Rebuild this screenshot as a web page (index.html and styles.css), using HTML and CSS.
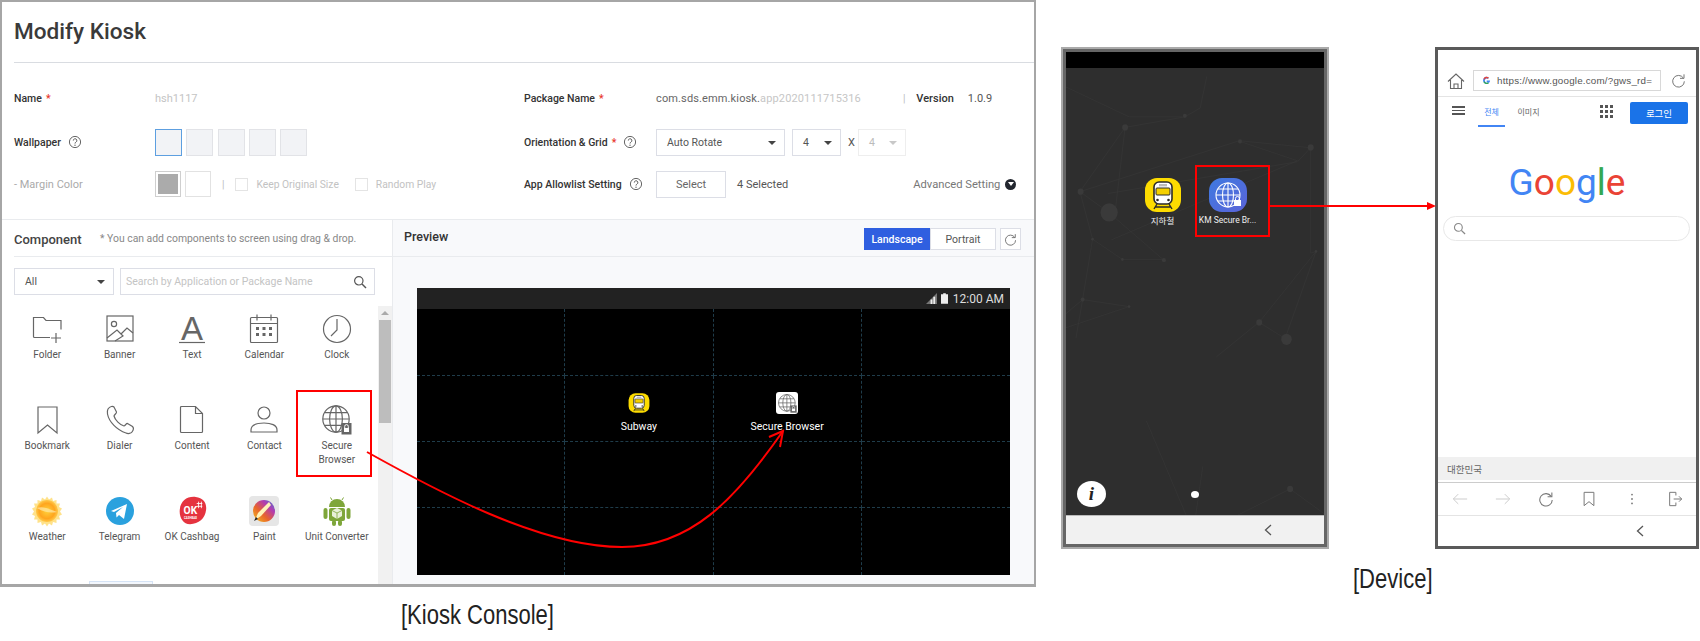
FILE: index.html
```html
<!DOCTYPE html>
<html lang="en">
<head>
<meta charset="UTF-8" />
<title>Modify Kiosk</title>
<link rel="stylesheet" href="styles.css">
</head>
<body>

<svg class="defs" width="0" height="0">
  <symbol id="i-help" viewBox="0 0 14 14">
    <circle cx="7" cy="7" r="5.6" fill="none" stroke="#666" stroke-width="1"/>
    <path d="M5.3 5.6a1.8 1.8 0 1 1 2.7 1.5c-.7.4-1 .7-1 1.5" fill="none" stroke="#666"/>
    <circle cx="7" cy="10.2" r=".7" fill="#666"/>
  </symbol>
  <symbol id="i-search" viewBox="0 0 14 14">
    <circle cx="5.8" cy="5.8" r="4.2" fill="none" stroke="currentColor" stroke-width="1.2"/>
    <path d="M9 9l4 4" stroke="currentColor" stroke-width="1.4"/>
  </symbol>
  <symbol id="i-globe" viewBox="0 0 30 30">
    <g fill="none" stroke="currentColor" stroke-width="1.2">
      <circle cx="14" cy="14" r="13.2"/>
      <ellipse cx="14" cy="14" rx="6.4" ry="13.2"/>
      <path d="M14 .8v26.4M.8 14h26.4M2.6 7.6h22.8M2.6 20.4h22.8"/>
    </g>
    <rect x="19.5" y="18" width="10" height="11.5" fill="currentColor"/>
    <rect x="22" y="23" width="5" height="4" fill="#fff"/>
    <path d="M22.7 23v-1.6a1.8 1.8 0 0 1 3.6 0V23" fill="none" stroke="#fff"/>
  </symbol>
  <symbol id="i-train" viewBox="0 0 38 38">
    <rect x="1" y="2" width="36" height="34" rx="12" fill="#fddc00"/>
    <rect x="10" y="6" width="18" height="22" rx="5" fill="#fff" stroke="#2a2a2a" stroke-width="1.6"/>
    <rect x="12" y="12" width="14" height="7" rx="1" fill="#f5d000" stroke="#2a2a2a"/>
    <rect x="15" y="8" width="8" height="2.4" fill="#bbb"/>
    <circle cx="13.5" cy="24" r="1.3" fill="#2a2a2a"/>
    <circle cx="24.5" cy="24" r="1.3" fill="#2a2a2a"/>
    <path d="M13 28l-3 5M25 28l3 5M11 31h16" stroke="#2a2a2a" stroke-width="1.4" fill="none"/>
  </symbol>
  <symbol id="i-reload" viewBox="0 0 18 18">
    <path d="M14.8 6A7 7 0 1 0 16 10" fill="none" stroke="currentColor" stroke-width="1.2"/>
    <path d="M15.6 1.6V6.4H10.8" fill="none" stroke="currentColor" stroke-width="1.2"/>
  </symbol>
  <symbol id="i-back" viewBox="0 0 8 12">
    <path d="M7 1L1.5 6 7 11" fill="none" stroke="currentColor" stroke-width="1.3"/>
  </symbol>
</svg>

<div class="stage">

  <div class="console-col">
    <section class="console">
      <h1 class="title">Modify Kiosk</h1>

      <div class="form">
        <div class="form-col">
          <div class="row">
            <span class="lbl">Name <i class="req">*</i></span>
            <span class="val-off">hsh1117</span>
          </div>
          <div class="row">
            <span class="lbl">Wallpaper <svg class="help"><use href="#i-help"/></svg></span>
            <span class="swatches">
              <b class="wall wall-on"></b><b class="wall"></b><b class="wall"></b><b class="wall"></b><b class="wall"></b>
            </span>
          </div>
          <div class="row">
            <span class="lbl lbl-off">- Margin Color</span>
            <span class="margin-box"><b class="margin-fill"></b></span>
            <span class="margin-box margin-white"></span>
            <span class="sep">|</span>
            <span class="chk"></span><span class="chk-txt">Keep Original Size</span>
            <span class="chk chk-2"></span><span class="chk-txt">Random Play</span>
          </div>
        </div>

        <div class="form-col form-right">
          <div class="row">
            <span class="lbl lbl-r">Package Name <i class="req">*</i></span>
            <span class="pkg">com.sds.emm.kiosk.<span class="pkg-off">app2020111715316</span></span>
            <span class="sep sep-r">|</span>
            <span class="ver-lbl">Version</span>
            <span class="ver">1.0.9</span>
          </div>
          <div class="row">
            <span class="lbl lbl-r">Orientation &amp; Grid <i class="req">*</i> <svg class="help"><use href="#i-help"/></svg></span>
            <span class="sel sel-rotate">Auto Rotate<i class="caret"></i></span>
            <span class="sel sel-num">4<i class="caret"></i></span>
            <span class="x">X</span>
            <span class="sel sel-num2">4<i class="caret caret-off"></i></span>
          </div>
          <div class="row">
            <span class="lbl lbl-r">App Allowlist Setting <svg class="help"><use href="#i-help"/></svg></span>
            <span class="btn-select">Select</span>
            <span class="selected">4 Selected</span>
            <span class="advanced">Advanced Setting <i class="adv-dot"><i class="adv-tri"></i></i></span>
          </div>
        </div>
      </div>

      <div class="work">
        <div class="comp">
          <div class="comp-head">
            <span class="comp-title">Component</span>
            <span class="comp-hint">* You can add components to screen using drag &amp; drop.</span>
          </div>
          <div class="filters">
            <span class="sel sel-all">All<i class="caret"></i></span>
            <span class="search">Search by Application or Package Name<svg class="search-ico"><use href="#i-search"/></svg></span>
          </div>
          <div class="comp-body">
            <div class="comp-list">
              <div class="comp-grid">
                <div class="item">
                  <svg class="ico" viewBox="0 0 30 30"><path d="M1.5 16V3.5h10l2.500 3h15v9M1.500 16v6.500a1 1 0 0 0 1 1H18M24 19v10M19 24h10" fill="none" stroke="#666" stroke-width="1.2"/></svg>
                  <span>Folder</span>
                </div>
                <div class="item">
                  <svg class="ico" viewBox="0 0 30 30"><g fill="none" stroke="#666" stroke-width="1.2"><rect x="2" y="2" width="26" height="25"/><circle cx="9" cy="10" r="2.6"/><path d="M2 24l10-8 6 6-8 5M16 20l6-6 6 5"/></g></svg>
                  <span>Banner</span>
                </div>
                <div class="item">
                  <svg class="ico" viewBox="0 0 30 30"><text class="ico-a" x="15" y="26" text-anchor="middle">A</text><path d="M2 28.500h26" stroke="#666" stroke-width="1.2"/></svg>
                  <span>Text</span>
                </div>
                <div class="item">
                  <svg class="ico" viewBox="0 0 30 30"><g fill="none" stroke="#666" stroke-width="1.2"><rect x="1.5" y="3.500" width="27" height="25" rx="1"/><path d="M1.500 9.500h27M8 .5v6M22 .5v6"/></g><g fill="#666"><rect x="7" y="13" width="3" height="3"/><rect x="13.500" y="13" width="3" height="3"/><rect x="20" y="13" width="3" height="3"/><rect x="7" y="19" width="3" height="3"/><rect x="13.500" y="19" width="3" height="3"/><rect x="20" y="19" width="3" height="3"/></g></svg>
                  <span>Calendar</span>
                </div>
                <div class="item">
                  <svg class="ico" viewBox="0 0 30 30"><g fill="none" stroke="#666" stroke-width="1.2"><circle cx="15" cy="15" r="13.500"/><path d="M15 5v11l-6 6"/></g></svg>
                  <span>Clock</span>
                </div>

                <div class="item">
                  <svg class="ico" viewBox="0 0 30 30"><path d="M6 2h19v26l-9.500-8L6 28z" fill="none" stroke="#666" stroke-width="1.2"/></svg>
                  <span>Bookmark</span>
                </div>
                <div class="item">
                  <svg class="ico" viewBox="0 0 30 30"><path d="M3 4c2-3 5-3 6-2l2.500 5c.5 1-2.500 3-2.500 4 1 4 6 9 10 10 1 0 2.500-3 3.500-2.500l5 3c1 1 1 3.500-.5 5.500-1 1.500-4 2-6 1C12 25 4 17 2.500 9 2 7 2.500 5 3 4z" fill="none" stroke="#666" stroke-width="1.2"/></svg>
                  <span>Dialer</span>
                </div>
                <div class="item">
                  <svg class="ico" viewBox="0 0 30 30"><path d="M4.500 1.500h14l7 7v18a1 1 0 0 1-1 1h-20a1 1 0 0 1-1-1v-24a1 1 0 0 1 1-1zM18.500 1.500v7h7" fill="none" stroke="#666" stroke-width="1.2"/></svg>
                  <span>Content</span>
                </div>
                <div class="item">
                  <svg class="ico" viewBox="0 0 30 30"><g fill="none" stroke="#666" stroke-width="1.2"><circle cx="15" cy="8" r="6"/><path d="M2 27v-2c0-5 6-7 13-7s13 2 13 7v2z"/></g></svg>
                  <span>Contact</span>
                </div>
                <div class="item">
                  <svg class="ico ico-globe"><use href="#i-globe"/></svg>
                  <span>Secure<br>Browser</span>
                </div>

                <div class="item">
                  <svg class="ico" viewBox="0 0 30 30">
                    <defs><radialGradient id="sun"><stop offset="0" stop-color="#ffd23c"/><stop offset=".7" stop-color="#ffa51e"/><stop offset="1" stop-color="#ffc94a"/></radialGradient></defs>
                    <path d="M15 .5l2 3 3-2 1 3.500 3.500-1 0 3.500 3.500 0-1 3.500 3 1.500-2 3 2 3-3 1.500 1 3.500-3.500 0 0 3.500-3.500-1-1 3.500-3-2-2 3-2-3-3 2-1-3.500-3.500 1 0-3.500-3.500 0 1-3.500-3-1.500 2-3-2-3 3-1.500-1-3.500 3.500 0 0-3.500 3.500 1 1-3.500 3 2z" fill="#ffe28a"/>
                    <circle cx="15" cy="15" r="11" fill="url(#sun)"/>
                    <path d="M5 12c6-2 12 1 20 4-6 1-12 1-20-4z" fill="#ffe9a8" opacity=".7"/>
                  </svg>
                  <span>Weather</span>
                </div>
                <div class="item">
                  <svg class="ico" viewBox="0 0 30 30"><circle cx="15" cy="15" r="14" fill="#2aa1de"/><path d="M6 15l16-7-3 15-5-4-2.500 2.500-.5-4.500 7-6-9 5z" fill="#fff"/></svg>
                  <span>Telegram</span>
                </div>
                <div class="item">
                  <svg class="ico" viewBox="0 0 32 32"><path d="M3 14C4 5 11 0 20 1c8 1 12 6 11 14-1 9-8 15-17 15C6 30 2 22 3 14z" fill="#e5333f"/><text class="ico-ok" x="7" y="19">OK</text><text class="ico-ok-sm" x="7.500" y="24">CASHBAG</text><path d="M21 8h6M21 11h6M23 6v7M26 6v7" stroke="#fff" stroke-width=".9"/></svg>
                  <span>OK Cashbag</span>
                </div>
                <div class="item">
                  <svg class="ico" viewBox="0 0 30 30">
                    <defs><linearGradient id="paint" x1="0" y1="1" x2="1" y2="0"><stop offset="0" stop-color="#f4c21b"/><stop offset=".4" stop-color="#e8642b"/><stop offset=".7" stop-color="#b33bb0"/><stop offset="1" stop-color="#3a7fd5"/></linearGradient></defs>
                    <rect width="30" height="30" rx="4" fill="#e6e6e6"/>
                    <circle cx="15" cy="15" r="11" fill="url(#paint)"/>
                    <path d="M6 24l3-7L20 6l2 3-10 11z" fill="#fff3b8"/>
                    <path d="M5 25l2-4 2 2z" fill="#222"/>
                  </svg>
                  <span>Paint</span>
                </div>
                <div class="item">
                  <svg class="ico" viewBox="0 0 30 30">
                    <g fill="#7ea63a"><path d="M7 11a8 8 0 0 1 16 0z"/><rect x="7" y="12" width="16" height="13" rx="2"/><rect x="1.500" y="12" width="4" height="11" rx="2"/><rect x="24.500" y="12" width="4" height="11" rx="2"/><rect x="10" y="24" width="4" height="6" rx="2"/><rect x="16" y="24" width="4" height="6" rx="2"/></g>
                    <path d="M10 4L8.500 1.500M20 4l1.500-2.500" stroke="#7ea63a"/>
                    <path d="M15 12l5 2.500v5.500L15 23l-5-3v-5.500z" fill="#e9f0da"/>
                    <path d="M10 14.500l5 2.500 5-2.500M15 17v6" stroke="#7ea63a" fill="none" stroke-width=".8"/>
                  </svg>
                  <span>Unit Converter</span>
                </div>
              </div>
              <div class="peek"></div>
            </div>
            <div class="scroll"><i class="scroll-up"></i><i class="scroll-thumb"></i></div>
          </div>
        </div>

        <div class="preview">
          <div class="prev-head">
            <span class="prev-title">Preview</span>
            <span class="prev-tools">
              <span class="seg seg-on">Landscape</span><span class="seg">Portrait</span>
              <span class="refresh"><svg class="refresh-ico"><use href="#i-reload"/></svg></span>
            </span>
          </div>
          <div class="shot">
            <div class="status">
              <svg class="sig" viewBox="0 0 12 12"><path d="M0 12L12 0v12z" fill="#777"/><path d="M5 12V7h2v5zM8 12V4h2v8z" fill="#eee"/></svg>
              <svg class="bat" viewBox="0 0 8 12"><path d="M2.500 0h3v1H8v11H0V1h2.500z" fill="#eee"/></svg>
              <span>12:00 AM</span>
            </div>
            <div class="cells">
              <i class="cell"></i><i class="cell"></i><i class="cell"></i><i class="cell"></i>
              <i class="cell"></i>
              <div class="cell app"><svg class="app-ico"><use href="#i-train"/></svg><span>Subway</span></div>
              <div class="cell app"><span class="app-white"><svg class="app-glb"><use href="#i-globe"/></svg></span><span>Secure Browser</span></div>
              <i class="cell"></i>
              <i class="cell"></i><i class="cell"></i><i class="cell"></i><i class="cell"></i>
              <i class="cell"></i><i class="cell"></i><i class="cell"></i><i class="cell"></i>
            </div>
          </div>
        </div>
      </div>
    </section>
    <div class="cap cap-kiosk"><span class="cap-txt">[Kiosk Console]</span></div>
  </div>

  <div class="device-col">
    <div class="phones">
      <div class="phone phone-home">
        <div class="phone-in">
          <div class="topbar"></div>
          <div class="home">
            <svg class="net" viewBox="48 36 777 1272" preserveAspectRatio="none">
              <g fill="none" stroke="#363636" stroke-width="2">
                <path d="M48 90l190 85h168l46-25 20-90M226 205l180-30M226 205L90 388l88 60 165 135M226 205l-30 240M90 388l480-145 215 20-40 40-570 90M572 245l173 55-560 225M90 388l38 135 90 58h125M785 263v300l16-5-170 200-130 100M128 523L98 695l-50 40M98 695l140 20-190 60M98 695l-20 110M801 558L710 800"/>
                <path d="M460 1170l-30 195 30 60M723 1234L445 1365h380M723 1234l102 70M630 760l85 50M290 1040l145 325"/>
              </g>
              <g fill="#3a3a3a"><circle cx="178" cy="447" r="26"/><circle cx="226" cy="205" r="9"/><circle cx="406" cy="172" r="6"/><circle cx="572" cy="245" r="6"/><circle cx="785" cy="262" r="9"/><circle cx="92" cy="388" r="9"/><circle cx="128" cy="523" r="4"/><circle cx="218" cy="581" r="4"/><circle cx="343" cy="583" r="6"/><circle cx="98" cy="695" r="6"/><circle cx="238" cy="715" r="4"/><circle cx="630" cy="760" r="9"/><circle cx="712" cy="808" r="16"/><circle cx="801" cy="558" r="4"/><circle cx="723" cy="1234" r="9"/></g>
            </svg>
            <div class="home-apps">
              <div class="home-app"><svg class="home-ico"><use href="#i-train"/></svg><span class="ko">지하철</span></div>
              <div class="home-app">
                <svg class="home-ico" viewBox="0 0 38 38">
                  <defs><linearGradient id="km" x1="0" y1="0" x2="1" y2="1"><stop offset="0" stop-color="#3f7ae0"/><stop offset="1" stop-color="#5a63d8"/></linearGradient></defs>
                  <rect y="2" width="38" height="34" rx="13" fill="url(#km)"/>
                  <g fill="none" stroke="#fff" stroke-width="1.100"><circle cx="19" cy="19" r="12"/><ellipse cx="19" cy="19" rx="5.500" ry="12"/><path d="M19 7v24M7 19h24M9 13h20M9 25h20"/></g>
                  <rect x="25" y="24" width="7" height="6" fill="#fff"/><path d="M26.500 24v-1.500a2 2 0 0 1 4 0V24" fill="none" stroke="#fff"/>
                </svg>
                <span>KM Secure Br...</span>
              </div>
            </div>
            <div class="dock">
              <span class="info">i</span>
              <span class="dot"></span>
            </div>
          </div>
          <div class="navbar navbar-home"><svg class="chev"><use href="#i-back"/></svg></div>
        </div>
      </div>

      <div class="phone phone-web">
        <div class="web">
          <div class="urlbar">
            <svg class="u-home" viewBox="0 0 18 18"><path d="M1 9.500L9 2l8 7.500M3.500 8v8.500h11V8M7 16.500v-4.500h4v4.500" fill="none" stroke="#666" stroke-width="1.100"/></svg>
            <span class="url">
              <svg class="g-mini" viewBox="0 0 10 10"><path d="M9 5H5.200v1.600h2.100A2.300 2.300 0 1 1 6.600 3l1.100-1.100A3.900 3.900 0 1 0 9 5z" fill="#4285f4"/><path d="M1.500 3.200L2.900 4.300A2.300 2.300 0 0 1 6.600 3l1.100-1.100a3.900 3.900 0 0 0-6.200 1.300z" fill="#ea4335"/><path d="M1.500 6.800l1.400-1a2.300 2.300 0 0 0 3.400 1.200l1.300 1A3.900 3.900 0 0 1 1.500 6.800z" fill="#34a853"/></svg>
              <span class="url-txt">https://www.google.com/?gws_rd=</span>
            </span>
            <svg class="u-reload"><use href="#i-reload"/></svg>
          </div>
          <div class="tabs">
            <span class="burger"><i></i><i></i><i></i></span>
            <span class="tab tab-on ko">전체</span>
            <span class="tab ko">이미지</span>
            <span class="apps"><i></i><i></i><i></i><i></i><i></i><i></i><i></i><i></i><i></i></span>
            <span class="login ko">로그인</span>
          </div>
          <div class="g-main">
            <div class="logo"><span class="c-b">G</span><span class="c-r">o</span><span class="c-y">o</span><span class="c-b">g</span><span class="c-g">l</span><span class="c-r">e</span></div>
            <div class="pill"><svg class="pill-ico"><use href="#i-search"/></svg></div>
          </div>
          <div class="region ko">대한민국</div>
          <div class="tools">
            <svg class="tool" viewBox="0 0 18 18"><path d="M17 9H1.500M7 3.500L1.500 9 7 14.500" fill="none" stroke="#ccc" stroke-width="1.100"/></svg>
            <svg class="tool" viewBox="0 0 18 18"><path d="M1 9h15.500M11 3.500L16.500 9 11 14.500" fill="none" stroke="#ccc" stroke-width="1.100"/></svg>
            <svg class="tool tool-dark"><use href="#i-reload"/></svg>
            <svg class="tool" viewBox="0 0 18 18"><path d="M3.500 1.500h11v15L9 12l-5.500 4.500z" fill="none" stroke="#777" stroke-width="1.100"/></svg>
            <svg class="tool" viewBox="0 0 18 18"><g fill="#777"><circle cx="9" cy="4" r="1"/><circle cx="9" cy="9" r="1"/><circle cx="9" cy="14" r="1"/></g></svg>
            <svg class="tool" viewBox="0 0 18 18"><path d="M10 5V1.500H3v15h7V13M7.500 9h9M13.500 6l3 3-3 3" fill="none" stroke="#777" stroke-width="1.100"/></svg>
          </div>
          <div class="navbar navbar-web"><svg class="chev"><use href="#i-back"/></svg></div>
        </div>
      </div>
    </div>
    <div class="cap cap-device"><span class="cap-txt">[Device]</span></div>
  </div>

  <svg class="notes" viewBox="0 0 1700 641">
    <g fill="none" stroke="#f00" stroke-width="2">
      <rect x="297" y="391" width="74" height="85"/>
      <rect x="1196" y="166" width="73" height="70"/>
      <path d="M367 452C435 490 540 547 622 547 690 547 735 500 783 431"/>
      <path d="M769 437L783 431 780 447"/>
      <path d="M1270 206H1430"/>
    </g>
    <path d="M1436 206l-9-4v8z" fill="#f00"/>
  </svg>
</div>

</body>
</html>
```

FILE: styles.css
```css
* { box-sizing: border-box; }
body { margin: 0; background: #fff; font-family: Roboto, "Noto Sans CJK KR", sans-serif; color: #333; }
i { font-style: normal; }
b { font-weight: normal; }
.defs { position: absolute; }
.ko { font-family: "Noto Sans CJK KR", sans-serif; }

.stage { position: relative; display: flex; width: 1700px; height: 641px; overflow: hidden; }
.notes { position: absolute; left: 0; top: 0; width: 1700px; height: 641px; pointer-events: none; }

.cap { font-family: "Liberation Sans", sans-serif; font-size: 27px; line-height: 30px; color: #222; white-space: nowrap; }
.cap-txt { display: inline-block; transform: scaleX(.815); transform-origin: left center; }
.cap-kiosk { margin-top: 13px; padding-left: 401px; }
.cap-device { margin-top: 15px; padding-left: 292px; }

/* console */
.console-col { width: 1036px; flex: none; }
.console { width: 1036px; height: 587px; border: 2px solid #a6a6a6; border-bottom-width: 3px; display: flex; flex-direction: column; overflow: hidden; }
.title { margin: 0 0 0 12px; height: 61px; line-height: 60px; font-size: 22.6px; font-weight: 500; color: #3a3a3a; border-bottom: 1px solid #d9dce1; flex: none; }

.form { display: flex; height: 157px; padding: 13px 0 0 12px; border-bottom: 1px solid #e9ebee; flex: none; }
.form-col { width: 510px; flex: none; }
.form-right { width: 512px; }
.row { display: flex; align-items: center; height: 44px; font-size: 10.5px; }
.row:last-child { height: 40px; }
.lbl { width: 140px; font-weight: 500; color: #333; display: flex; align-items: center; gap: 4px; flex: none; }
.lbl-r { width: 132px; }
.lbl-off { color: #aaa; font-weight: 400; font-size: 11px; }
.req { color: #e8342a; }
.help { width: 14px; height: 14px; margin-left: 3px; }
.val-off { color: #c4c4c4; font-size: 11px; margin-left: 1px; }
.swatches { display: flex; gap: 4.3px; margin-left: 1px; }
.wall { width: 27px; height: 27px; background: #f2f3f6; border: 1px solid #e2e3e7; }
.wall-on { border-color: #5d9fe0; }
.margin-box { width: 26px; height: 26px; border: 1px solid #cfcfcf; padding: 2px; margin-left: 1px; }
.margin-fill { display: block; width: 100%; height: 100%; background: #ababab; }
.margin-white { margin-left: 4px; border-color: #e2e2e2; }
.sep { color: #bbb; font-size: 10px; margin: 0 11px 0 11px; }
.chk { width: 13px; height: 13px; border: 1px solid #e4e4e4; margin-right: 8px; flex: none; }
.chk-2 { margin-left: 16px; }
.chk-txt { color: #c2c2c2; font-size: 10.3px; white-space: nowrap; }

.pkg { color: #666; font-size: 11px; letter-spacing: .13px; white-space: nowrap; }
.pkg-off { color: #c6c6c6; }
.sep-r { margin: 0 11px 0 42px; }
.ver-lbl { font-weight: 500; font-size: 11px; color: #333; }
.ver { margin-left: 14px; color: #555; font-size: 11px; }

.sel { position: relative; display: flex; align-items: center; height: 27px; padding-left: 10px; background: #fff; border: 1px solid #dcdee6; color: #555; font-size: 10.5px; }
.caret { position: absolute; right: 8px; top: 11px; border: 4px solid transparent; border-top: 4.5px solid #444; border-bottom: 0; }
.caret-off { border-top-color: #c8c8c8; }
.sel-rotate { width: 129px; }
.sel-num { width: 49px; margin-left: 7px; }
.x { margin: 0 3px 0 7px; font-size: 11px; color: #555; }
.sel-num2 { width: 48px; border-color: #eee; color: #bbb; }
.btn-select { display: flex; align-items: center; justify-content: center; width: 70px; height: 27px; border: 1px solid #dcdee6; color: #666; font-size: 11px; }
.selected { margin-left: 11px; color: #555; font-size: 11px; }
.advanced { display: flex; align-items: center; gap: 5px; margin-left: 125px; color: #777; font-size: 11.2px; white-space: nowrap; }
.adv-dot { display: flex; align-items: center; justify-content: center; width: 11px; height: 11px; border-radius: 50%; background: #22262e; }
.adv-tri { border: 3px solid transparent; border-top: 4px solid #fff; border-bottom: 0; }

.work { display: flex; flex: 1; min-height: 0; }
.comp { width: 391px; flex: none; display: flex; flex-direction: column; border-right: 1px solid #e9ebee; }
.comp-head { display: flex; align-items: center; height: 37px; margin-left: 12px; border-bottom: 1px solid #e9ebee; flex: none; }
.comp-title { font-size: 13px; font-weight: 500; color: #444; width: 86px; margin-top: 3px; }
.comp-hint { font-size: 10.4px; color: #888; white-space: nowrap; }
.filters { display: flex; gap: 6px; margin: 11px 0 0 12px; flex: none; }
.sel-all { width: 100px; }
.search { position: relative; display: flex; align-items: center; width: 255px; height: 27px; padding-left: 5px; border: 1px solid #dcdee6; color: #c4c4c4; font-size: 10.5px; }
.search-ico { position: absolute; right: 7px; top: 6px; width: 14px; height: 14px; color: #555; }

.comp-body { display: flex; flex: 1; min-height: 0; margin-top: 11px; }
.comp-list { flex: 1; padding: 8px 0 0 9px; overflow: hidden; }
.comp-grid { display: grid; grid-template-columns: repeat(5, 72.4px); grid-template-rows: 91px 91px 85px; }
.item { display: flex; flex-direction: column; align-items: center; font-size: 10px; line-height: 14px; color: #555; text-align: center; white-space: nowrap; }
.ico { width: 30px; height: 30px; margin-bottom: 4px; flex: none; overflow: visible; }
.ico-globe { color: #666; }
.ico-a { font: 400 33px "Liberation Sans", sans-serif; fill: #666; }
.ico-ok { font: 700 11px Roboto, sans-serif; fill: #fff; }
.ico-ok-sm { font: 700 3px Roboto, sans-serif; fill: #fff; }
.peek { width: 64px; height: 20px; margin-left: 78px; background: #f3f7fd; border: 1px solid #d5e3f5; }
.scroll { position: relative; width: 14px; flex: none; background: #f1f1f1; }
.scroll-up { position: absolute; left: 3px; top: 5px; border: 4px solid transparent; border-bottom: 4px solid #aaa; border-top: 0; }
.scroll-thumb { position: absolute; left: 1px; top: 14px; width: 12px; height: 103px; background: #bdbdbd; }

.preview { flex: 1; background: #f8f9fb; display: flex; flex-direction: column; }
.prev-head { display: flex; align-items: center; justify-content: space-between; height: 37px; padding: 0 13px 0 11px; border-bottom: 1px solid #e9ebee; flex: none; }
.prev-title { font-size: 12.5px; font-weight: 500; color: #333; margin-bottom: 4px; }
.prev-tools { display: flex; align-items: center; margin-top: 2px; }
.seg { display: flex; align-items: center; justify-content: center; width: 66px; height: 22px; border: 1px solid #dcdee6; background: #fff; color: #555; font-size: 10.5px; }
.seg-on { background: #2f5fe0; border-color: #2f5fe0; color: #fff; font-weight: 500; }
.refresh { display: flex; align-items: center; justify-content: center; width: 21px; height: 22px; margin-left: 4px; background: #fff; border: 1px solid #dcdee6; }
.refresh-ico { width: 13px; height: 13px; color: #666; }

.shot { width: 593px; height: 287px; margin: 31px 0 0 24px; background: #000; display: flex; flex-direction: column; color: #fff; }
.status { display: flex; align-items: center; justify-content: flex-end; gap: 4px; height: 21px; padding-right: 6px; background: #222; color: #ddd; font-size: 12px; flex: none; }
.sig { width: 11px; height: 11px; }
.bat { width: 7px; height: 11px; margin-right: 1px; }
.cells { flex: 1; display: grid; grid-template-columns: repeat(4, 1fr); grid-template-rows: 67px 66px 66px 67px; }
.cell { display: block; border-right: 1px dashed #1f3c4a; border-bottom: 1px dashed #1f3c4a; }
.cell:nth-child(4n) { border-right: 0; }
.cell:nth-last-child(-n+4) { border-bottom: 0; }
.app { display: flex; flex-direction: column; align-items: center; padding-top: 16px; gap: 6px; font-size: 10.5px; line-height: 14px; }
.app-ico { width: 22px; height: 22px; }
.app-white { display: flex; align-items: center; justify-content: center; width: 22px; height: 22px; background: #fff; border-radius: 3px; color: #666; }
.app-glb { width: 19px; height: 19px; }

/* devices */
.device-col { margin-left: 25px; padding-top: 47px; flex: none; }
.phones { display: flex; gap: 106px; }
.phone { height: 502px; flex: none; }
.phone-home { width: 268px; border: 2px solid #aaa; background: #aaa; }
.phone-in { display: flex; flex-direction: column; height: 100%; border: 3px solid #666; }
.topbar { height: 16px; background: #000; flex: none; }
.home { position: relative; flex: 1; background: #2e2e2e; display: flex; flex-direction: column; overflow: hidden; }
.net { position: absolute; inset: 0; width: 100%; height: 100%; }
.home-apps { position: relative; display: flex; margin: 108px 0 0 64px; }
.home-app { display: flex; flex-direction: column; align-items: center; width: 65px; font-size: 8.5px; line-height: 12px; color: #eee; white-space: nowrap; }
.home-ico { width: 38px; height: 38px; }
.dock { position: relative; display: flex; align-items: center; margin-top: auto; height: 28px; margin-bottom: 7px; padding-left: 11px; }
.info { display: flex; align-items: center; justify-content: center; width: 29px; height: 26px; border-radius: 50%; background: #fff; color: #222; font: italic 700 19px "Liberation Serif", serif; }
.dot { width: 8px; height: 7px; margin-left: 85px; border-radius: 50%; background: #fff; }
.navbar { display: flex; align-items: center; flex: none; color: #555; }
.navbar-home { height: 29px; padding-left: 198px; background: #f1f1f1; border-top: 1px solid #bbb; }
.chev { width: 8px; height: 12px; }

.phone-web { width: 264px; border: 3px solid #5a5a5a; background: #fff; }
.web { display: flex; flex-direction: column; height: 100%; }
.urlbar { display: grid; grid-template-columns: 35px 188px 1fr; align-items: center; height: 47px; padding-top: 20px; padding-bottom: 5px; border-bottom: 1px solid #e4e4e4; flex: none; }
.u-home { width: 18px; height: 18px; justify-self: center; }
.url { display: flex; align-items: center; gap: 6px; height: 21px; padding-left: 8px; border: 1px solid #d8d8d8; overflow: hidden; }
.g-mini { width: 9px; height: 9px; flex: none; }
.url-txt { font-family: "Liberation Sans", sans-serif; font-size: 9.8px; letter-spacing: .2px; color: #555; white-space: nowrap; }
.u-reload { width: 15px; height: 15px; justify-self: center; color: #777; }

.tabs { display: flex; align-items: flex-start; height: 30px; flex: none; }
.burger { display: flex; flex-direction: column; gap: 2px; width: 40px; padding: 9px 0 0 14px; }
.burger i { width: 13px; height: 1.5px; background: #555; }
.tab { display: flex; align-items: center; justify-content: center; height: 30px; width: 27px; font-size: 8px; color: #666; border-bottom: 2px solid transparent; white-space: nowrap; }
.tab-on { color: #4285f4; border-bottom-color: #4285f4; margin-right: 10px; }
.apps { display: grid; grid-template-columns: repeat(3, 3px); gap: 2px; margin: 8px 17px 0 auto; }
.apps i { width: 3px; height: 3px; background: #555; }
.login { display: flex; align-items: center; justify-content: center; width: 58px; height: 22px; margin: 5px 8px 0 0; border-radius: 2px; background: #1a73e8; color: #fff; font-size: 9.5px; }

.g-main { flex: 1; }
.logo { margin-top: 31px; height: 50px; text-align: center; font: 400 37px/50px Roboto, sans-serif; }
.c-b { color: #4285f4; }
.c-r { color: #ea4335; }
.c-y { color: #fbbc05; }
.c-g { color: #34a853; }
.pill { display: flex; align-items: center; height: 25px; margin: 8px 6px 0 5px; padding-left: 9px; border: 1px solid #e8e8e8; border-radius: 13px; color: #888; }
.pill-ico { width: 13px; height: 13px; }

.region { display: flex; align-items: center; height: 23px; padding-left: 9px; background: #f0f0f0; font-size: 9.5px; color: #666; flex: none; }
.tools { display: grid; grid-template-columns: repeat(6, 43px); justify-items: center; align-items: center; height: 34px; margin-top: 2px; border-top: 1px solid #ccc; border-bottom: 1px solid #e4e4e4; flex: none; }
.tool { width: 16px; height: 16px; }
.tool-dark { color: #777; }
.navbar-web { height: 30px; padding-left: 198px; }
```
